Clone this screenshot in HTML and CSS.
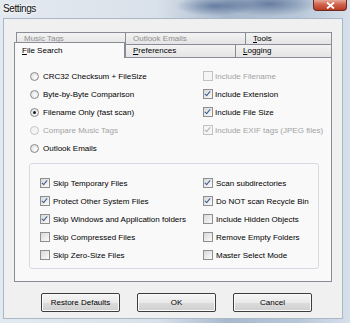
FILE: index.html
```html
<!DOCTYPE html>
<html lang="en">
<head>
    <meta charset="UTF-8">
    <title>Settings</title>
    <link rel="stylesheet" href="styles.css">
</head>
<body>

    <div class="window">
        <div class="titlebar">
            <span class="title">Settings</span>
            <span class="close-btn">
                <svg width="9" height="7" viewBox="0 0 9 7"><path d="M1 0.5 L8 6.5 M8 0.5 L1 6.5" stroke="#fff" stroke-width="1.8"/></svg>
            </span>
        </div>

        <div class="client">
            <!-- Tab strip, two rows -->
            <div class="tab-row back-row">
                <div class="tab disabled w-music">Music Tags</div>
                <div class="tab disabled w-outlook">Outlook Emails</div>
                <div class="tab w-tools"><u>T</u>ools</div>
            </div>
            <div class="tab-row front-row">
                <div class="tab selected w-search"><u>F</u>ile Search</div>
                <div class="tab w-prefs"><u>P</u>references</div>
                <div class="tab w-logging"><u>L</u>ogging</div>
            </div>

            <div class="panel">
                <div class="options">
                    <div class="col-left">
                        <div class="row"><span class="radio"></span>CRC32 Checksum + FileSize</div>
                        <div class="row"><span class="radio"></span>Byte-by-Byte Comparison</div>
                        <div class="row"><span class="radio on"></span>Filename Only (fast scan)</div>
                        <div class="row disabled"><span class="radio"></span>Compare Music Tags</div>
                        <div class="row"><span class="radio"></span>Outlook Emails</div>
                    </div>
                    <div class="col-right">
                        <div class="row disabled"><span class="check"></span>Include Filename</div>
                        <div class="row"><span class="check on"></span>Include Extension</div>
                        <div class="row"><span class="check on"></span>Include File Size</div>
                        <div class="row disabled"><span class="check on"></span>Include EXIF tags (JPEG files)</div>
                    </div>
                </div>

                <div class="group">
                    <div class="group-left">
                        <div class="row"><span class="check on"></span>Skip Temporary Files</div>
                        <div class="row"><span class="check on"></span>Protect Other System Files</div>
                        <div class="row"><span class="check on"></span>Skip Windows and Application folders</div>
                        <div class="row"><span class="check"></span>Skip Compressed Files</div>
                        <div class="row"><span class="check"></span>Skip Zero-Size Files</div>
                    </div>
                    <div class="group-right">
                        <div class="row"><span class="check on"></span>Scan subdirectories</div>
                        <div class="row"><span class="check on"></span>Do NOT scan Recycle Bin</div>
                        <div class="row"><span class="check"></span>Include Hidden Objects</div>
                        <div class="row"><span class="check"></span>Remove Empty Folders</div>
                        <div class="row"><span class="check"></span>Master Select Mode</div>
                    </div>
                </div>
            </div>

            <div class="buttons">
                <button class="btn">Restore Defaults</button>
                <button class="btn">OK</button>
                <button class="btn">Cancel</button>
            </div>
        </div>
    </div>

</body>
</html>
```

FILE: styles.css
```css
body {
    margin: 0;
    font-family: "Liberation Sans", Arial, sans-serif;
    font-size: 8px;
    color: #000;
    background: #fff;
}

.window {
    width: 350px;
    height: 323px;
    box-sizing: border-box;
    padding: 0 7px 4px 3px;
    background:
        radial-gradient(ellipse 40px 10px at 215px 6px, rgba(40, 70, 120, 0.55), transparent),
        radial-gradient(ellipse 50px 12px at 270px 4px, rgba(30, 60, 110, 0.5), transparent),
        linear-gradient(to right, #e3e9f0 0%, #d9e1ea 45%, #a9b9cd 65%, #b8c7d8 85%, #d6e0ea 100%);
}

.titlebar {
    height: 18px;
    display: flex;
    align-items: flex-start;
}

.title {
    font-size: 10px;
    letter-spacing: -0.4px;
    color: #111;
    margin: 3px 0 0 0;
    text-shadow: 0 0 6px #fff, 0 0 3px #fff;
}

.close-btn {
    margin-left: auto;
    margin-right: -4px;
    width: 34px;
    height: 11px;
    box-sizing: border-box;
    border: 1px solid #6d2a1f;
    border-top: none;
    border-radius: 0 0 4px 4px;
    background: linear-gradient(#e7a898, #d0634b 45%, #b93a22);
    display: flex;
    align-items: center;
    justify-content: center;
}

.client {
    height: 301px;
    box-sizing: border-box;
    border: 1px solid #aab7c6;
    background: #f0f0f0;
    padding: 13px 0 0 10px;
}

/* tabs */
.tab-row {
    display: flex;
    height: 12px;
}

.back-row {
    margin-left: 2px;
}

.front-row {
    height: 13px;
    position: relative;
    z-index: 1;
}

.tab {
    box-sizing: border-box;
    border: 1px solid #898c95;
    border-bottom: none;
    background: linear-gradient(#f3f3f3, #e4e4e4);
    padding-left: 7px;
    line-height: 11px;
    margin-right: -1px;
}

.tab.disabled {
    color: #8f8f8f;
}

.front-row .tab {
    line-height: 12px;
}

.tab.selected {
    background: #f9f9f9;
    height: 16px;
    margin-top: -2px;
    margin-right: 0;
    line-height: 16px;
}

.w-music { width: 110px; }
.w-outlook { width: 121px; }
.w-tools { width: 87px; }
.w-search { width: 111px; }
.w-prefs { width: 111px; }
.w-logging { width: 97px; }

.panel {
    width: 318px;
    height: 225px;
    box-sizing: border-box;
    border: 1px solid #898c95;
    background: #f9f9f9;
    padding-top: 9px;
}

.options {
    display: flex;
    margin-left: 15px;
}

.col-left {
    width: 173px;
}

.row {
    height: 18px;
    display: flex;
    align-items: center;
    white-space: nowrap;
}

.row.disabled {
    color: #a3a3a3;
}

/* radio and check boxes */
.radio {
    width: 9px;
    height: 9px;
    box-sizing: border-box;
    border-radius: 50%;
    border: 1px solid #8a8a8a;
    background: radial-gradient(circle at 60% 60%, #fdfdfd, #d8d8d8);
    margin-right: 4px;
    display: flex;
    align-items: center;
    justify-content: center;
}

.radio.on::after {
    content: "";
    width: 3px;
    height: 3px;
    border-radius: 50%;
    background: #1b1b1b;
}

.row.disabled .radio {
    border-color: #c4c4c4;
    background: #f4f4f4;
}

.check {
    width: 10px;
    height: 10px;
    box-sizing: border-box;
    border: 1px solid #8e8f8f;
    background: linear-gradient(135deg, #d9d9d9, #fafafa);
    margin-right: 2px;
    position: relative;
}

.check.on::after {
    content: "";
    position: absolute;
    left: 2px;
    top: 0;
    width: 2px;
    height: 5px;
    border: solid #3f5a8e;
    border-width: 0 1.5px 1.5px 0;
    transform: rotate(40deg);
}

.row.disabled .check {
    border-color: #c2c2c2;
    background: #f5f5f5;
}

.row.disabled .check.on::after {
    border-color: #b0b0b0;
}

/* group box */
.group {
    margin: 6px 0 0 14px;
    width: 290px;
    height: 106px;
    box-sizing: border-box;
    border: 1px solid #d5dbe1;
    border-radius: 3px;
    padding: 10px 0 0 10px;
    display: flex;
}

.group-left {
    width: 163px;
}

.group .check {
    margin-right: 3px;
}

/* dialog buttons */
.buttons {
    display: flex;
    gap: 17px;
    margin: 11px 0 0 27px;
}

.btn {
    width: 79px;
    height: 19px;
    font-family: "Liberation Sans", Arial, sans-serif;
    font-size: 8px;
    color: #000;
    border: 1px solid #3c3c3c;
    border-radius: 2px;
    background: linear-gradient(#f6f6f6, #e9e9e9 50%, #dcdcdc 51%, #cfcfcf);
    box-shadow: inset 0 0 0 1px #fbfbfb;
    padding: 0;
}
```
